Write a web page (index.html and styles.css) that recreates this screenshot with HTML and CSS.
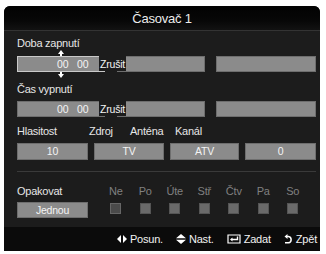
FILE: index.html
```html
<!DOCTYPE html>
<html>
<head>
<meta charset="utf-8">
<link rel="stylesheet" href="styles.css">
</head>
<body>
<div class="panel">
  <div class="title">Časovač 1</div>
  <div class="content">
    <div class="label l1">Doba zapnutí</div>
    <div class="row3 r1">
      <div class="field f-time selected">
        <span class="tri up"></span>
        <span class="hh">00</span><span class="mm">00</span>
        <span class="cancel">Zrušit</span>
        <span class="tri down"></span>
      </div>
      <div class="field f-mid"></div>
      <div class="field f-wide"></div>
    </div>
    <div class="label l2">Čas vypnutí</div>
    <div class="row3 r2">
      <div class="field f-time">
        <span class="hh">00</span><span class="mm">00</span>
        <span class="cancel">Zrušit</span>
      </div>
      <div class="field f-mid"></div>
      <div class="field f-wide"></div>
    </div>
    <div class="label l3 labels4">
      <span class="c1">Hlasitost</span><span class="c2">Zdroj</span><span class="c3">Anténa</span><span class="c4">Kanál</span>
    </div>
    <div class="row4">
      <div class="field c">10</div>
      <div class="field c">TV</div>
      <div class="field c">ATV</div>
      <div class="field c">0</div>
    </div>
    <div class="sep"></div>
    <div class="rep">
      <div class="repcol">
        <div class="label">Opakovat</div>
        <div class="field c jed">Jednou</div>
      </div>
      <div class="days">
        <span class="day">Ne</span><span class="day">Po</span><span class="day">Úte</span><span class="day">Stř</span><span class="day">Čtv</span><span class="day">Pa</span><span class="day">So</span>
        <span class="cell"><i class="box dark"></i></span><span class="cell"><i class="box"></i></span><span class="cell"><i class="box"></i></span><span class="cell"><i class="box"></i></span><span class="cell"><i class="box"></i></span><span class="cell"><i class="box"></i></span><span class="cell"><i class="box"></i></span>
      </div>
    </div>
  </div>
  <div class="footer">
    <span class="hint">
      <svg width="10" height="8" viewBox="0 0 10 8"><path d="M0 4 L4 0 L4 8 Z M10 4 L6 0 L6 8 Z" fill="#fff"/></svg>
      Posun.
    </span>
    <span class="hint">
      <svg width="10" height="10" viewBox="0 0 10 10"><path d="M5 0 L10 4.3 L0 4.3 Z M5 10 L10 5.7 L0 5.7 Z" fill="#fff"/></svg>
      Nast.
    </span>
    <span class="hint">
      <svg width="14" height="10" viewBox="0 0 14 10"><path d="M1 1 H13 V9 H1 Z" fill="none" stroke="#fff" stroke-width="1.2"/><path d="M10.5 2.5 V5.5 H4.5" fill="none" stroke="#fff" stroke-width="1.4"/><path d="M3 5.5 L5.5 3.5 L5.5 7.5 Z" fill="#fff"/></svg>
      Zadat
    </span>
    <span class="hint">
      <svg width="9" height="10" viewBox="0 0 9 10"><path d="M2.5 2.5 H4.5 A3.2 3.2 0 0 1 4.5 8.8 H1" fill="none" stroke="#fff" stroke-width="1.5"/><path d="M0.5 2.5 L3.5 0 L3.5 5 Z" fill="#fff"/></svg>
      Zpět
    </span>
  </div>
</div>
</body>
</html>
```
FILE: styles.css
```css
html, body {
  margin: 0;
  padding: 0;
  background: #fff;
}
body {
  font-family: "Liberation Sans", Arial, sans-serif;
  width: 326px;
  height: 254px;
  overflow: hidden;
}
.panel {
  margin: 6px 0 0 4px;
  width: 316px;
  height: 245px;
  background: #1c1c1c;
  border-radius: 6px 6px 0 0;
  display: flex;
  flex-direction: column;
  overflow: hidden;
}
.title {
  height: 24px;
  line-height: 25px;
  text-align: center;
  color: #ececec;
  font-size: 13px;
  letter-spacing: -0.2px;
  background: linear-gradient(#020202, #070707 60%, #121212);
  border-bottom: 1px solid #333;
  flex: none;
}
.content {
  padding: 6px 4px 0 13px;
  flex: 1;
}
.label {
  color: #e6e6e6;
  font-size: 11px;
  line-height: 12px;
  height: 12px;
  letter-spacing: -0.25px;
  white-space: nowrap;
}
.l2 { margin-top: 11px; }
.l3 { margin-top: 8px; }
.row3 {
  display: flex;
  margin-top: 7px;
}
.r2 { margin-top: 6px; }
.field {
  height: 16px;
  box-sizing: border-box;
  background: #8b8b8b;
  border: 1px solid #6e6e6e;
  color: #f4f4f4;
  font-size: 10.5px;
  line-height: 14px;
  letter-spacing: -0.2px;
  position: relative;
}
.f-time { width: 88px; }
.f-mid { width: 88px; margin-left: 12px; }
.f-wide { width: 100px; margin-left: 11px; }
.selected { border-color: #c9c9c9; }
.hh { position: absolute; left: 39px; top: 0; }
.mm { position: absolute; left: 59px; top: 0; }
.cancel {
  position: absolute;
  left: 81px;
  top: -1px;
  padding: 1px 1px 0 1px;
  line-height: 14px;
  background: #1c1c1c;
  color: #f4f4f4;
  z-index: 2;
}
.tri {
  position: absolute;
  left: 40px;
  width: 0;
  height: 0;
  border-left: 3px solid transparent;
  border-right: 3px solid transparent;
}
.tri.up { top: -7px; border-bottom: 4px solid #fff; }
.tri.down { bottom: -7px; border-top: 4px solid #fff; }
.tri.up::after, .tri.down::after {
  content: "";
  position: absolute;
  left: -1px;
  width: 2px;
  height: 2px;
  background: #fff;
}
.tri.up::after { top: 4px; }
.tri.down::after { top: -6px; }
.labels4 { display: flex; }
.labels4 span { display: block; }
.c1 { width: 72px; }
.c2 { width: 41px; }
.c3 { width: 45px; }
.row4 {
  display: flex;
  gap: 6px;
  margin-top: 6px;
}
.row4 .field { width: 71px; height: 17px; line-height: 15px; }
.row4 .field:nth-child(2) { width: 70px; }
.row4 .field:nth-child(3) { width: 69px; }
.c { text-align: center; }
.sep {
  height: 1px;
  background: #3a3a3a;
  margin: 11px 0 0 0;
  width: 299px;
}
.rep {
  display: flex;
  margin-top: 13px;
}
.repcol { width: 84px; }
.jed { width: 71px; margin-top: 5px; }
.days {
  display: grid;
  grid-template-columns: repeat(7, 29.5px);
  grid-template-rows: 12px 21px;
  align-items: center;
}
.day {
  color: #808080;
  font-size: 11px;
  line-height: 12px;
  text-align: center;
  letter-spacing: -0.2px;
}
.cell {
  display: flex;
  justify-content: center;
  align-items: center;
  padding-top: 2px;
}
.box {
  display: block;
  width: 11px;
  height: 11px;
  box-sizing: border-box;
  background: #6a6a6a;
  border: 1px solid #555;
}
.box.dark {
  background: #4a4a4a;
  border-color: #666;
}
.footer {
  height: 24px;
  flex: none;
  background: #0b0b0b;
  display: flex;
  justify-content: flex-end;
  align-items: center;
  padding-right: 3px;
  color: #f2f2f2;
  font-size: 11px;
  letter-spacing: -0.2px;
}
.hint {
  display: flex;
  align-items: center;
  gap: 3px;
  margin-left: 13px;
}
.hint svg { display: block; }
```
